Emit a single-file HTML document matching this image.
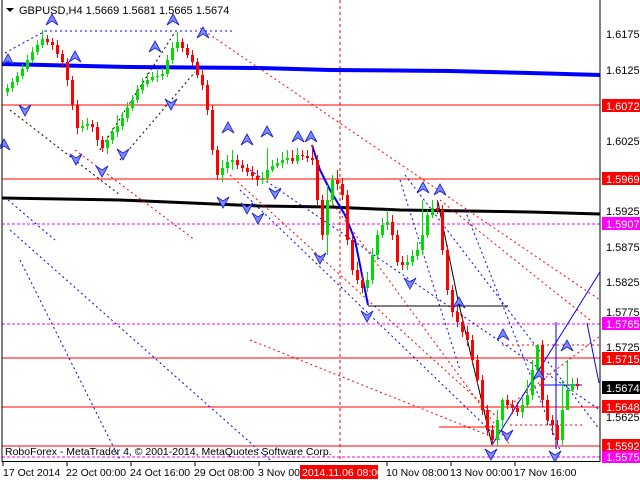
<!DOCTYPE html>
<html><head><meta charset="utf-8"><style>
body{margin:0;background:#fff;width:640px;height:480px;overflow:hidden}
svg{display:block;font-family:"Liberation Sans",sans-serif;font-size:11px}
</style></head><body>
<svg width="640" height="480" xmlns="http://www.w3.org/2000/svg">
<defs>
<path id="au" d="M0 -6L-6 5L0 1L6 5Z" fill="#7a8cff" stroke="#1a1ad0" stroke-width="0.8"/>
<path id="ad" d="M0 6L-6 -5L0 -1L6 -5Z" fill="#7a8cff" stroke="#1a1ad0" stroke-width="0.8"/>
</defs>
<rect width="640" height="480" fill="#fff"/>
<line x1="2" y1="105" x2="600" y2="105" stroke="#f00"/>
<line x1="2" y1="179" x2="600" y2="179" stroke="#f00"/>
<line x1="2" y1="224" x2="600" y2="224" stroke="#f0f" stroke-dasharray="3,2"/>
<line x1="2" y1="324" x2="600" y2="324" stroke="#f0f" stroke-dasharray="3,2"/>
<line x1="2" y1="358" x2="600" y2="358" stroke="#f00"/>
<line x1="2" y1="407" x2="600" y2="407" stroke="#f00"/>
<line x1="2" y1="446" x2="600" y2="446" stroke="#f00"/>
<line x1="2" y1="457" x2="600" y2="457" stroke="#f0f" stroke-dasharray="3,2"/>
<line x1="340" y1="0" x2="340" y2="461" stroke="#f00" stroke-dasharray="3,3"/>
<polyline points="2,64 130,67 260,68 330,70 450,71 530,73 600,75" fill="none" stroke="#00f" stroke-width="4"/>
<polyline points="2,198 120,200 260,206 330,207 400,210 530,212 600,214" fill="none" stroke="#000" stroke-width="3"/>
<g fill="none" stroke-dasharray="2,3">
<line x1="5" y1="53" x2="45" y2="31" stroke="#00f"/>
<line x1="45" y1="31" x2="235" y2="31" stroke="#00f"/>
<line x1="200" y1="28" x2="600" y2="300" stroke="#f00"/>
<line x1="10" y1="110" x2="120" y2="195" stroke="#000"/>
<line x1="100" y1="150" x2="175" y2="32" stroke="#000"/>
<line x1="120" y1="160" x2="195" y2="72" stroke="#000"/>
<line x1="75" y1="150" x2="195" y2="240" stroke="#f00"/>
<line x1="8" y1="200" x2="55" y2="240" stroke="#00f"/>
<line x1="10" y1="230" x2="270" y2="460" stroke="#00f"/>
<line x1="20" y1="260" x2="120" y2="460" stroke="#00f"/>
<line x1="250" y1="170" x2="600" y2="410" stroke="#00f"/>
<line x1="240" y1="190" x2="500" y2="440" stroke="#00f"/>
<line x1="230" y1="175" x2="500" y2="420" stroke="#f00"/>
<line x1="330" y1="200" x2="510" y2="445" stroke="#f00"/>
<line x1="400" y1="180" x2="460" y2="370" stroke="#00f"/>
<line x1="405" y1="175" x2="600" y2="430" stroke="#00f"/>
<line x1="440" y1="200" x2="590" y2="320" stroke="#f00"/>
<line x1="465" y1="210" x2="560" y2="450" stroke="#00f"/>
<line x1="510" y1="405" x2="600" y2="336" stroke="#f00"/>
<line x1="502" y1="345" x2="600" y2="345" stroke="#f00"/>
<line x1="510" y1="425" x2="583" y2="425" stroke="#f00"/>
<line x1="250" y1="340" x2="500" y2="440" stroke="#f00"/>
</g>
<line x1="439" y1="427" x2="495" y2="427" stroke="#f00"/>
<polyline points="312,145 320,170 330,190 345,215 355,240 368,305" fill="none" stroke="#00f" stroke-width="2"/>
<line x1="368" y1="306" x2="508" y2="306" stroke="#000"/>
<polyline points="438,202 458,300 492,445" fill="none" stroke="#000"/>
<line x1="492" y1="445" x2="600" y2="272" stroke="#00f"/>
<line x1="556" y1="322" x2="556" y2="449" stroke="#00f"/>
<line x1="539" y1="385" x2="582" y2="385" stroke="#00f"/>
<polyline points="587,323 593,353 599,383" fill="none" stroke="#00f"/>
<!-- wicks -->
<path stroke="#0d0" fill="none" d="M7.5 84v12M12.5 78v14M17.5 72v13M22.5 64v15M27.5 55v17M32.5 47v16M37.5 40v15M42.5 30v18M82.5 120v12M87.5 118v12M107.5 136v18M112.5 128v16M117.5 115v22M122.5 112v18M127.5 102v20M132.5 95v16M137.5 85v18M142.5 78v16M147.5 73v14M152.5 72v10M157.5 70v12M162.5 68v12M167.5 55v22M172.5 42v22M177.5 32v20M222.5 160v22M227.5 155v18M232.5 150v20M262.5 172v12M267.5 148v34M272.5 160v12M277.5 158v10M282.5 152v16M287.5 150v14M297.5 148v16M327.5 185v70M332.5 175v30M367.5 272v20M372.5 248v36M377.5 230v30M382.5 218v20M387.5 210v20M407.5 255v15M412.5 250v16M417.5 242v18M422.5 200v55M427.5 210v28M432.5 200v18M497.5 410v36M502.5 398v30M522.5 398v20M527.5 380v28M532.5 360v40M537.5 345v30M562.5 380v65M567.5 360v35M572.5 378v14"/>
<path stroke="#f00" fill="none" d="M47.5 35v10M52.5 38v12M57.5 40v18M62.5 50v18M67.5 58v28M72.5 76v34M77.5 100v34M92.5 120v12M97.5 122v24M102.5 136v16M182.5 38v14M187.5 44v14M192.5 50v16M197.5 58v20M202.5 70v20M207.5 80v35M212.5 105v50M217.5 146v34M237.5 155v14M242.5 160v12M247.5 164v12M252.5 166v14M257.5 170v16M292.5 150v14M302.5 150v10M307.5 150v12M312.5 145v20M317.5 155v50M322.5 195v45M337.5 170v20M342.5 178v22M347.5 190v55M352.5 235v40M357.5 262v22M362.5 275v18M392.5 215v25M397.5 230v36M402.5 256v14M437.5 200v14M442.5 205v50M447.5 245v50M452.5 285v32M457.5 305v22M462.5 315v22M467.5 326v20M472.5 335v30M477.5 355v30M482.5 375v40M487.5 405v30M492.5 425v20M507.5 395v14M512.5 400v14M517.5 402v14M542.5 340v65M547.5 395v30M552.5 415v20M557.5 420v25M577.5 378v12"/>
<!-- bodies -->
<path fill="#0d0" d="M6 88h3v4h-3zM11 82h3v6h-3zM16 76h3v6h-3zM21 69h3v7h-3zM26 60h3v9h-3zM31 52h3v8h-3zM36 45h3v7h-3zM41 39h3v6h-3zM81 126h3v2h-3zM86 124h3v2h-3zM106 140h3v8h-3zM111 132h3v8h-3zM116 126h3v6h-3zM121 118h3v8h-3zM126 108h3v10h-3zM131 100h3v8h-3zM136 90h3v10h-3zM141 84h3v6h-3zM146 80h3v4h-3zM151 77h3v3h-3zM156 76h3v1h-3zM161 74h3v2h-3zM166 60h3v14h-3zM171 48h3v12h-3zM176 42h3v6h-3zM221 168h3v7h-3zM226 162h3v6h-3zM231 160h3v2h-3zM261 178h3v2h-3zM266 170h3v8h-3zM271 166h3v4h-3zM276 163h3v3h-3zM281 160h3v3h-3zM286 158h3v2h-3zM296 155h3v6h-3zM326 200h3v35h-3zM331 180h3v20h-3zM366 280h3v8h-3zM371 255h3v25h-3zM376 235h3v20h-3zM381 225h3v10h-3zM386 222h3v3h-3zM406 262h3v3h-3zM411 256h3v6h-3zM416 250h3v6h-3zM421 235h3v15h-3zM426 215h3v20h-3zM431 208h3v7h-3zM496 420h3v20h-3zM501 400h3v20h-3zM521 405h3v7h-3zM526 395h3v10h-3zM531 370h3v25h-3zM536 345h3v25h-3zM561 410h3v30h-3zM566 390h3v20h-3zM571 384h3v6h-3z"/>
<path fill="#f00" d="M46 39h3v3h-3zM51 42h3v3h-3zM56 45h3v9h-3zM61 54h3v8h-3zM66 62h3v18h-3zM71 80h3v25h-3zM76 105h3v23h-3zM91 124h3v3h-3zM96 127h3v13h-3zM101 140h3v8h-3zM181 42h3v6h-3zM186 48h3v7h-3zM191 55h3v7h-3zM196 62h3v13h-3zM201 75h3v10h-3zM206 85h3v25h-3zM211 110h3v40h-3zM216 150h3v25h-3zM236 160h3v5h-3zM241 165h3v3h-3zM246 168h3v4h-3zM251 172h3v4h-3zM256 176h3v4h-3zM291 158h3v3h-3zM301 155h3v1h-3zM306 156h3v2h-3zM311 158h3v2h-3zM316 160h3v40h-3zM321 200h3v35h-3zM336 180h3v4h-3zM341 184h3v11h-3zM346 195h3v45h-3zM351 240h3v30h-3zM356 270h3v10h-3zM361 280h3v8h-3zM391 222h3v13h-3zM396 235h3v27h-3zM401 262h3v3h-3zM436 208h3v2h-3zM441 210h3v40h-3zM446 250h3v40h-3zM451 290h3v22h-3zM456 312h3v10h-3zM461 322h3v10h-3zM466 332h3v8h-3zM471 340h3v20h-3zM476 360h3v20h-3zM481 380h3v30h-3zM486 410h3v20h-3zM491 430h3v10h-3zM506 400h3v5h-3zM511 405h3v3h-3zM516 408h3v4h-3zM541 345h3v55h-3zM546 400h3v20h-3zM551 420h3v5h-3zM556 425h3v15h-3zM576 384h3v2h-3z"/>
<!-- fractal arrows -->
<use href="#au" x="52" y="20"/><use href="#au" x="8" y="60"/><use href="#au" x="75" y="57"/><use href="#au" x="155" y="47"/><use href="#au" x="173" y="20"/><use href="#au" x="203" y="33"/><use href="#au" x="228" y="128"/><use href="#au" x="247" y="140"/><use href="#au" x="267" y="132"/><use href="#au" x="298" y="137"/><use href="#au" x="311" y="137"/><use href="#au" x="423" y="188"/><use href="#au" x="440" y="190"/><use href="#au" x="459" y="303"/><use href="#au" x="503" y="335"/><use href="#au" x="567" y="346"/><use href="#au" x="539" y="375"/><use href="#au" x="4" y="145"/>
<use href="#ad" x="25" y="110"/><use href="#ad" x="76" y="159"/><use href="#ad" x="102" y="171"/><use href="#ad" x="123" y="154"/><use href="#ad" x="171" y="104"/><use href="#ad" x="223" y="202"/><use href="#ad" x="247" y="208"/><use href="#ad" x="258" y="218"/><use href="#ad" x="275" y="193"/><use href="#ad" x="410" y="283"/><use href="#ad" x="367" y="316"/><use href="#ad" x="491" y="454"/><use href="#ad" x="507" y="435"/><use href="#ad" x="555" y="456"/><use href="#ad" x="320" y="258"/>
<line x1="600" y1="0" x2="600" y2="462" stroke="#000"/>
<line x1="2" y1="0" x2="2" y2="462" stroke="#000"/>
<line x1="2" y1="461.5" x2="600" y2="461.5" stroke="#000"/>
<text x="19" y="14" fill="#000">GBPUSD,H4  1.5669 1.5681 1.5665 1.5674</text>
<path d="M6 8h8l-4 4z" fill="#000"/>
<text x="5" y="455" fill="#000" font-size="10.5">RoboForex - MetaTrader 4, © 2001-2014, MetaQuotes Software Corp.</text>
<g fill="#000">
<text x="606" y="38">1.6175</text><text x="606" y="74">1.6125</text>
<text x="606" y="145">1.6025</text><text x="606" y="215">1.5925</text>
<text x="606" y="251">1.5875</text><text x="606" y="286">1.5825</text>
<text x="606" y="316">1.5775</text><text x="606" y="351">1.5725</text>
<text x="606" y="421">1.5625</text>
</g>
<rect x="602" y="99" width="38" height="13" fill="#f00"/><text x="606" y="110" fill="#fff">1.6072</text>
<rect x="602" y="172" width="38" height="13" fill="#f00"/><text x="606" y="183" fill="#fff">1.5969</text>
<rect x="602" y="217" width="38" height="13" fill="#f0f"/><text x="606" y="228" fill="#fff">1.5907</text>
<rect x="602" y="317" width="38" height="13" fill="#f0f"/><text x="606" y="328" fill="#fff">1.5765</text>
<rect x="602" y="352" width="38" height="13" fill="#f00"/><text x="606" y="363" fill="#fff">1.5715</text>
<rect x="602" y="381" width="38" height="13" fill="#000"/><text x="606" y="392" fill="#fff">1.5674</text>
<rect x="602" y="400" width="38" height="13" fill="#f00"/><text x="606" y="411" fill="#fff">1.5648</text>
<rect x="602" y="439" width="38" height="13" fill="#f00"/><text x="606" y="450" fill="#fff">1.5592</text>
<rect x="602" y="451" width="38" height="12" fill="#f0f"/><text x="606" y="461" fill="#fff">1.5575</text>
<g stroke="#000">
<line x1="3" y1="462" x2="3" y2="466"/><line x1="67" y1="462" x2="67" y2="466"/><line x1="131" y1="462" x2="131" y2="466"/><line x1="195" y1="462" x2="195" y2="466"/><line x1="259" y1="462" x2="259" y2="466"/><line x1="387" y1="462" x2="387" y2="466"/><line x1="451" y1="462" x2="451" y2="466"/><line x1="515" y1="462" x2="515" y2="466"/>
</g>
<g fill="#000" font-size="10.5">
<text x="3" y="476">17 Oct 2014</text><text x="66" y="476">22 Oct 00:00</text>
<text x="130" y="476">24 Oct 16:00</text><text x="194" y="476">29 Oct 08:00</text>
<text x="258" y="476">3 Nov 00:00</text>
<text x="386" y="476">10 Nov 08:00</text><text x="450" y="476">13 Nov 00:00</text><text x="514" y="476">17 Nov 16:00</text>
</g>
<rect x="300" y="465" width="78" height="14" fill="#f00"/><text x="302" y="476" fill="#fff" font-size="10.5">2014.11.06 08:00</text>
</svg>
</body></html>
